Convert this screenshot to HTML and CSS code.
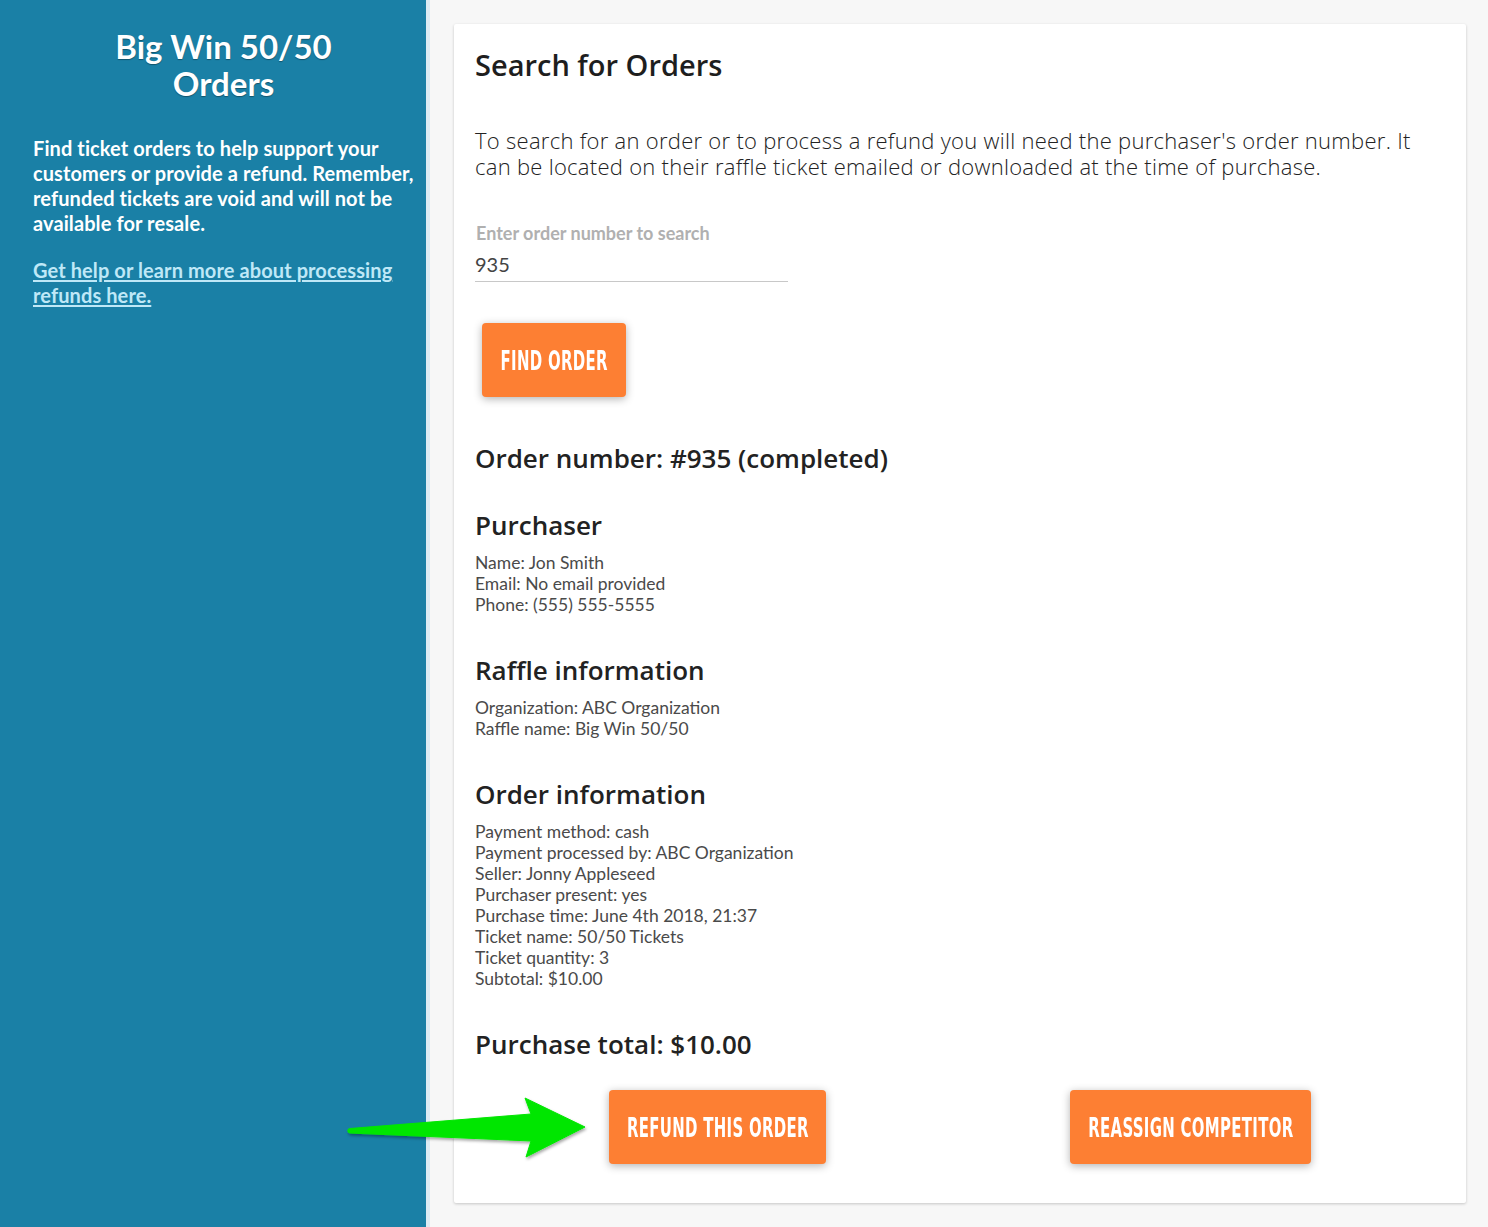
FILE: index.html
```html
<!DOCTYPE html>
<html lang="en">
<head>
<meta charset="utf-8">
<title>Big Win 50/50 Orders</title>
<link rel="stylesheet" href="styles.css">
</head>
<body>
<aside class="sidebar">
  <h1 class="side-title">Big Win 50/50<br>Orders</h1>
  <p class="side-text">Find ticket orders to help support your customers or provide a refund. Remember, refunded tickets are void and will not be available for resale.</p>
  <a class="side-link" href="#">Get help or learn more about processing refunds here.</a>
</aside>
<main class="main">
  <section class="card">
    <h2 class="card-title">Search for Orders</h2>
    <p class="intro">To search for an order or to process a refund you will need the purchaser's order number. It can be located on their raffle ticket emailed or downloaded at the time of purchase.</p>
    <label class="field-label" for="order">Enter order number to search</label>
    <div class="field"><input id="order" class="field-input" type="text" value="935"></div>
    <button class="btn btn-find"><span class="btn-label">FIND ORDER</span></button>

    <h3 class="order-num">Order number: #935 (completed)</h3>

    <h3 class="section-title">Purchaser</h3>
    <div class="lines">
      <div>Name: Jon Smith</div>
      <div>Email: No email provided</div>
      <div>Phone: (555) 555-5555</div>
    </div>

    <h3 class="section-title">Raffle information</h3>
    <div class="lines">
      <div>Organization: ABC Organization</div>
      <div>Raffle name: Big Win 50/50</div>
    </div>

    <h3 class="section-title">Order information</h3>
    <div class="lines">
      <div>Payment method: cash</div>
      <div>Payment processed by: ABC Organization</div>
      <div>Seller: Jonny Appleseed</div>
      <div>Purchaser present: yes</div>
      <div>Purchase time: June 4th 2018, 21:37</div>
      <div>Ticket name: 50/50 Tickets</div>
      <div>Ticket quantity: 3</div>
      <div>Subtotal: $10.00</div>
    </div>

    <h3 class="section-title total">Purchase total: $10.00</h3>

    <div class="actions">
      <button class="btn btn-refund"><span class="btn-label">REFUND THIS ORDER</span></button>
      <button class="btn btn-reassign"><span class="btn-label">REASSIGN COMPETITOR</span></button>
    </div>
  </section>
</main>
<svg class="arrow" width="260" height="80" viewBox="340 1090 260 80" aria-hidden="true">
  <defs>
    <filter id="sh" x="-10%" y="-20%" width="120%" height="140%">
      <feDropShadow dx="1" dy="2" stdDeviation="1.5" flood-color="#000" flood-opacity="0.35"/>
    </filter>
  </defs>
  <path filter="url(#sh)" fill="#00e600" stroke="#00e600" stroke-width="1" stroke-linejoin="round"
    d="M350,1128.5 L531,1114 L525,1098 L585,1127 L526,1157 L531,1141 L350,1133 A2.2,2.2 0 0 1 350,1128.5 Z"/>
</svg>
</body>
</html>
```
FILE: styles.css
```css
* { box-sizing: border-box; }
html, body { margin: 0; padding: 0; }
body {
  display: flex;
  min-height: 1227px;
  background: #f7f7f7;
  font-family: Lato, "Open Sans", sans-serif;
}
.sidebar {
  width: 430px;
  flex: 0 0 430px;
  background: #1a80a6;
  border-right: 4px solid #dcecf4;
  padding: 28px 12px 0 33px;
  color: #fff;
}
.side-title {
  margin: 0;
  text-align: center;
  font-family: Lato, sans-serif;
  font-weight: 700;
  font-size: 33px;
  line-height: 37px;
  text-shadow: 0 1px 1px rgba(0,0,0,0.35);
}
.side-text {
  margin: 34px 0 0;
  font-size: 20px;
  line-height: 25px;
  font-weight: 700;
  letter-spacing: 0.1px;
}
.side-link {
  display: block;
  margin-top: 22px;
  font-size: 20px;
  line-height: 25px;
  font-weight: 700;
  letter-spacing: 0.1px;
  color: #bfe8f7;
  text-decoration: underline;
  text-underline-offset: 2px;
  padding-right: 10px;
}
.main {
  flex: 1;
  padding: 24px 22px 25px 24px;
}
.card {
  background: #fff;
  box-shadow: 0 1px 3px rgba(0,0,0,0.2);
  border-radius: 2px;
  padding: 24px 21px 39px 21px;
  color: #222;
}
.card-title {
  margin: 0;
  font-family: "Open Sans", sans-serif;
  font-weight: 600;
  font-size: 29px;
  line-height: 34px;
  color: #1e1e1e;
}
.intro {
  margin: 45px 0 0;
  font-family: "Open Sans", sans-serif;
  font-weight: 300;
  font-size: 22px;
  line-height: 26px;
  letter-spacing: 0.28px;
  color: #222;
}
.field-label {
  display: block;
  margin-top: 44px;
  padding-left: 1px;
  font-family: Lato, sans-serif;
  font-weight: 700;
  font-size: 18px;
  line-height: 20px;
  color: #b0b0b0;
}
.field {
  width: 313px;
  margin-top: 9px;
  border-bottom: 1px solid #c8c8c8;
}
.field-input {
  display: block;
  width: 100%;
  border: 0;
  outline: 0;
  padding: 0 0 5px;
  font-family: Lato, sans-serif;
  font-size: 20px;
  line-height: 24px;
  color: #444;
  background: transparent;
}
.btn {
  height: 74px;
  border: 0;
  border-radius: 4px;
  background: #fd7f33;
  color: #fff;
  box-shadow: 0 2px 8px rgba(0,0,0,0.3);
  font-family: "DejaVu Sans Condensed", "DejaVu Sans", sans-serif;
  font-weight: 700;
  font-size: 27px;
  cursor: pointer;
  padding: 0;
  display: flex;
  align-items: center;
  justify-content: center;
}
.btn-label {
  display: inline-block;
  transform: scaleX(0.615);
  white-space: nowrap;
  letter-spacing: 0.5px;
}
.btn-find {
  width: 144px;
  margin: 41px 0 0 7px;
}
.order-num {
  margin: 46px 0 0;
  font-family: "Open Sans", sans-serif;
  font-weight: 600;
  font-size: 26px;
  line-height: 30px;
  color: #222;
}
.section-title {
  margin: 37px 0 0;
  font-family: "Open Sans", sans-serif;
  font-weight: 600;
  font-size: 26px;
  line-height: 30px;
  color: #222;
}
.lines + .section-title { margin-top: 40px; }
.lines {
  margin-top: 12px;
  font-family: Lato, sans-serif;
  font-size: 17.5px;
  line-height: 21px;
  color: #4a4a4a;
}
.actions {
  display: flex;
  margin-top: 31px;
  padding-left: 134px;
  gap: 244px;
}
.btn-refund { width: 217px; }
.btn-reassign { width: 241px; }
.arrow {
  position: absolute;
  left: 340px;
  top: 1090px;
}
```
